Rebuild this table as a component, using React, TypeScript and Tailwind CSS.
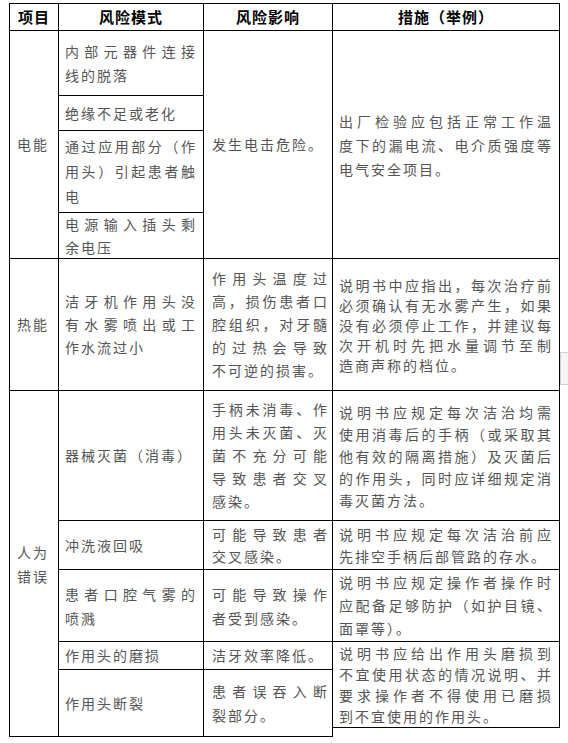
import React from 'react'

interface CellProps {
  lines: string[]
  className?: string
  justify?: boolean
}

// one table cell, lines are broken by hand like the source document
const Cell: React.FC<CellProps> = ({ lines, className = '', justify = true }) => (
  <div className={`border-r border-b border-black flex flex-col justify-center ${className}`}>
    {lines.map((line, i) => (
      <div
        key={i}
        className={justify && i < lines.length - 1 ? 'text-justify [text-align-last:justify]' : ''}
      >
        {line}
      </div>
    ))}
  </div>
)

const Head: React.FC<{ text: string; className?: string }> = ({ text, className = '' }) => (
  <div className={`border-r border-b border-black flex items-center justify-center text-[15px] font-bold text-black tracking-[1px] ${className}`}>
    {text}
  </div>
)

export default function App() {
  return (
    <div className="relative w-[568px] h-[743px] bg-white pt-[3px] pl-[9px] font-['Noto_Sans_CJK_SC',sans-serif] text-[14px] tracking-[2px] text-[#555]">
      <div className="grid w-[551px] grid-cols-[49px_145px_129px_227px] grid-rows-[27px_65px_35px_82px_46px_132px_130px_49px_72px_28px_67px] border-l border-t border-black">
        {/* header */}
        <Head text="项目" className="col-start-1 row-start-1" />
        <Head text="风险模式" className="col-start-2 row-start-1" />
        <Head text="风险影响" className="col-start-3 row-start-1" />
        <Head text="措施（举例）" className="col-start-4 row-start-1" />

        {/* 电能 */}
        <Cell lines={['电能']} justify={false} className="col-start-1 row-start-2 row-span-4 pl-[7px]" />
        <Cell lines={['内部元器件连接', '线的脱落']} className="col-start-2 row-start-2 px-[6px] leading-[24px]" />
        <Cell lines={['绝缘不足或老化']} className="col-start-2 row-start-3 px-[6px] leading-[24px]" />
        <Cell lines={['通过应用部分（作', '用头）引起患者触', '电']} className="col-start-2 row-start-4 px-[6px] leading-[25px]" />
        <Cell lines={['电源输入插头剩', '余电压']} className="col-start-2 row-start-5 px-[6px] leading-[23px]" />
        <Cell lines={['发生电击危险。']} className="col-start-3 row-start-2 row-span-4 pl-[8px] pr-[3px]" />
        <Cell
          lines={['出厂检验应包括正常工作温', '度下的漏电流、电介质强度等', '电气安全项目。']}
          className="col-start-4 row-start-2 row-span-4 px-[6px] leading-[24px]"
        />

        {/* 热能 */}
        <Cell lines={['热能']} justify={false} className="col-start-1 row-start-6 pl-[7px]" />
        <Cell lines={['洁牙机作用头没', '有水雾喷出或工', '作水流过小']} className="col-start-2 row-start-6 px-[6px] leading-[23px]" />
        <Cell
          lines={['作用头温度过', '高，损伤患者口', '腔组织，对牙髓', '的过热会导致', '不可逆的损害。']}
          className="col-start-3 row-start-6 pl-[8px] pr-[3px] leading-[23px]"
        />
        <Cell
          lines={['说明书中应指出，每次治疗前', '必须确认有无水雾产生，如果', '没有必须停止工作，并建议每', '次开机时先把水量调节至制', '造商声称的档位。']}
          className="col-start-4 row-start-6 px-[6px] leading-[20px]"
        />

        {/* 人为错误 */}
        <Cell lines={['人为', '错误']} justify={false} className="col-start-1 row-start-7 row-span-5 pl-[7px] leading-[24px]" />

        <Cell lines={['器械灭菌（消毒）']} className="col-start-2 row-start-7 px-[6px]" />
        <Cell
          lines={['手柄未消毒、作', '用头未灭菌、灭', '菌不充分可能', '导致患者交叉', '感染。']}
          className="col-start-3 row-start-7 pl-[8px] pr-[3px] leading-[23px]"
        />
        <Cell
          lines={['说明书应规定每次洁治均需', '使用消毒后的手柄（或采取其', '他有效的隔离措施）及灭菌后', '的作用头，同时应详细规定消', '毒灭菌方法。']}
          className="col-start-4 row-start-7 px-[6px] leading-[22px]"
        />

        <Cell lines={['冲洗液回吸']} className="col-start-2 row-start-8 px-[6px]" />
        <Cell lines={['可能导致患者', '交叉感染。']} className="col-start-3 row-start-8 pl-[8px] pr-[3px] leading-[22px]" />
        <Cell lines={['说明书应规定每次洁治前应', '先排空手柄后部管路的存水。']} className="col-start-4 row-start-8 px-[6px] leading-[22px]" />

        <Cell lines={['患者口腔气雾的', '喷溅']} className="col-start-2 row-start-9 px-[6px] leading-[24px]" />
        <Cell lines={['可能导致操作', '者受到感染。']} className="col-start-3 row-start-9 pl-[8px] pr-[3px] leading-[24px]" />
        <Cell
          lines={['说明书应规定操作者操作时', '应配备足够防护（如护目镜、', '面罩等）。']}
          className="col-start-4 row-start-9 px-[6px] leading-[23px]"
        />

        <Cell lines={['作用头的磨损']} className="col-start-2 row-start-10 px-[6px]" />
        <Cell lines={['洁牙效率降低。']} className="col-start-3 row-start-10 pl-[8px] pr-[3px]" />

        <Cell lines={['作用头断裂']} className="col-start-2 row-start-11 px-[6px]" />
        <Cell lines={['患者误吞入断', '裂部分。']} className="col-start-3 row-start-11 pl-[8px] pr-[3px] leading-[24px]" />

        <Cell
          lines={['说明书应给出作用头磨损到', '不宜使用状态的情况说明、并', '要求操作者不得使用已磨损', '到不宜使用的作用头。']}
          className="col-start-4 row-start-10 row-span-2 self-start h-[86px] px-[6px] leading-[21px]"
        />
      </div>

      {/* word's little table handle at the right edge */}
      <div className="absolute left-[560px] top-[352px] w-[8px] h-[33px] border-l border-t border-b border-[#cfcfcf] bg-[#f6f6f6]" />
    </div>
  )
}
